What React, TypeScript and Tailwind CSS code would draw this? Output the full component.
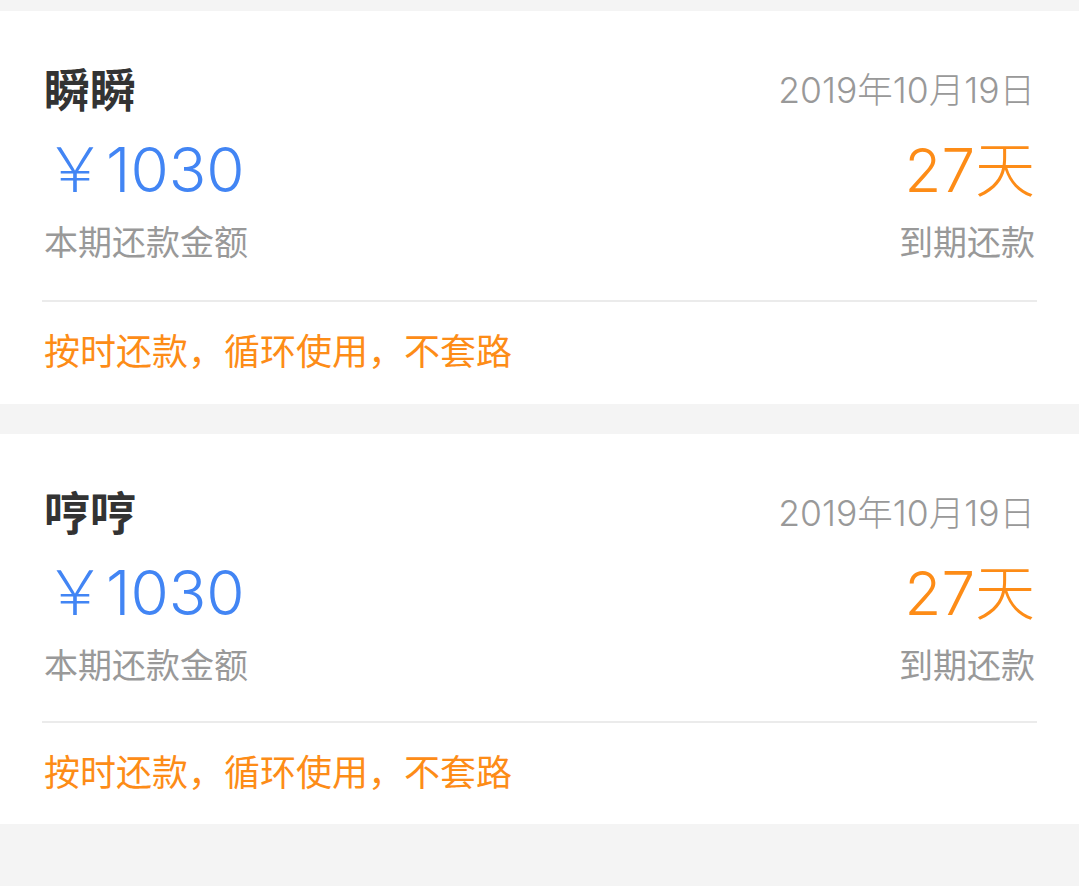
import React from "react";

const font = {
  fontFamily: '"Liberation Sans", "Noto Sans CJK SC", sans-serif',
};
const thin = {
  fontFamily: 'Inter, "Noto Sans CJK SC", sans-serif',
};

type Item = { name: string; compact?: boolean };

function Card({ name, compact }: Item) {
  return (
    <div
      className={
        compact
          ? "bg-white px-[42px] pt-[57px] pb-[32px]"
          : "bg-white px-[42px] pt-[57px] pb-[33px]"
      }
      style={font}
    >
      <div className="flex items-center justify-between px-[2px]">
        <div className="text-[46px] leading-none font-bold text-[#333333]">{name}</div>
        <div className="text-[35.5px] leading-none font-light text-[#999999]" style={thin}>
          2019年10月19日
        </div>
      </div>
      <div className="mt-[25px] flex items-center justify-between px-[2px]">
        <div className="text-[62px] leading-none font-light text-[#4285f4]" style={thin}>
          ￥1030
        </div>
        <div className="text-[60px] leading-none font-light text-[#fd8c17]" style={thin}>
          27天
        </div>
      </div>
      <div className="mt-[25px] flex items-center justify-between px-[2px]">
        <div className="text-[34px] leading-none text-[#999999]">本期还款金额</div>
        <div className="text-[34px] leading-none text-[#999999]">到期还款</div>
      </div>
      <div className={compact ? "mt-[38px] h-[2px] bg-[#ebebeb]" : "mt-[40px] h-[2px] bg-[#ebebeb]"} />
      <div className="mt-[33px] px-[2px] text-[36px] leading-none text-[#fd8c17]">
        按时还款，循环使用，不套路
      </div>
    </div>
  );
}

export default function App() {
  return (
    <div className="min-h-[886px] w-full bg-[#f4f4f4] pt-[11px]">
      <div className="flex flex-col gap-[30px]">
        <Card name="瞬瞬" />
        <Card name="哼哼" compact />
      </div>
    </div>
  );
}
